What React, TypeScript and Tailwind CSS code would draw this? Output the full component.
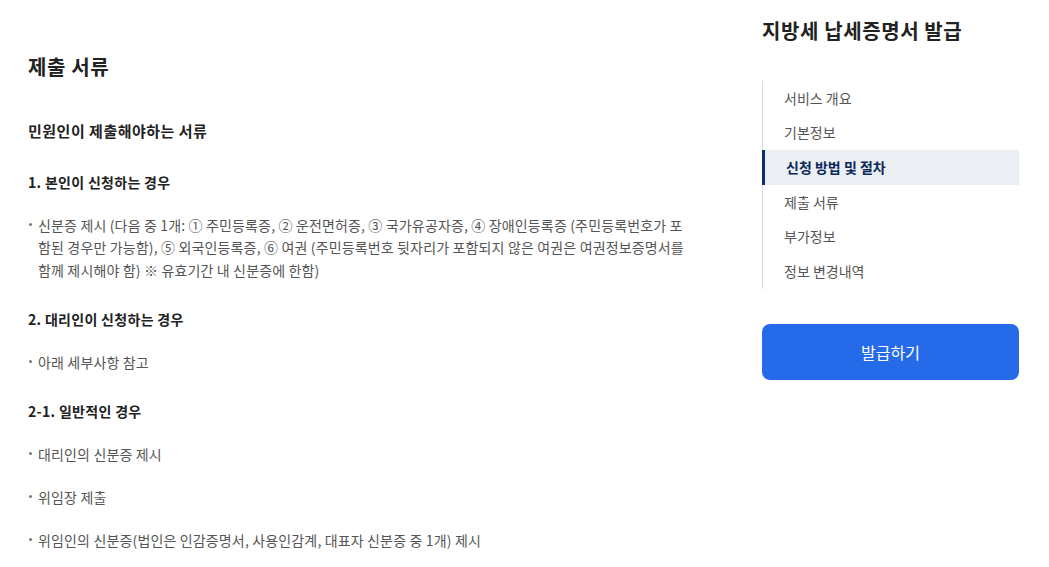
import React from "react";

const navItems = ["서비스 개요", "기본정보", "신청 방법 및 절차", "제출 서류", "부가정보", "정보 변경내역"];
const activeNav = "신청 방법 및 절차";

function Bullet({ children }: { children: React.ReactNode }) {
  return (
    <li className="relative mt-[20.5px] pl-[10px] text-[14px] leading-[22.5px] tracking-[0.15px] text-[#555]">
      <span className="absolute left-[1px] top-[9px] h-[3px] w-[3px] rounded-full bg-[#777]" />
      {children}
    </li>
  );
}

function SubHeading({ children }: { children: React.ReactNode }) {
  return <h4 className="mt-[27px] text-[14px] font-bold leading-[22px] tracking-[0.3px] text-[#222]">{children}</h4>;
}

export default function App() {
  return (
    <div
      className="flex min-h-screen w-full bg-white pl-[28px]"
      style={{ fontFamily: '"Noto Sans CJK KR", "Noto Sans", sans-serif' }}
    >
      {/* ── Main content ── */}
      <main className="w-[662px] shrink-0 pt-[53px]">
        <h2 className="text-[20px] font-bold leading-[28px] tracking-[0.6px] text-[#222]">제출 서류</h2>

        <h3 className="mt-[38px] text-[15px] font-bold leading-[24px] tracking-[0.5px] text-[#222]">민원인이 제출해야하는 서류</h3>

        <h4 className="mt-[28px] text-[14px] font-bold leading-[22px] tracking-[0.3px] text-[#222]">1. 본인이 신청하는 경우</h4>
        <ul>
          <Bullet>
            신분증 제시 (다음 중 1개: ① 주민등록증, ② 운전면허증, ③ 국가유공자증, ④ 장애인등록증 (주민등록번호가 포함된 경우만 가능함), ⑤ 외국인등록증, ⑥ 여권 (주민등록번호 뒷자리가 포함되지 않은 여권은 여권정보증명서를 함께 제시해야 함) ※ 유효기간 내 신분증에 한함)
          </Bullet>
        </ul>

        <SubHeading>2. 대리인이 신청하는 경우</SubHeading>
        <ul>
          <Bullet>아래 세부사항 참고</Bullet>
        </ul>

        <SubHeading>2-1. 일반적인 경우</SubHeading>
        <ul>
          <Bullet>대리인의 신분증 제시</Bullet>
          <Bullet>위임장 제출</Bullet>
          <Bullet>위임인의 신분증(법인은 인감증명서, 사용인감계, 대표자 신분증 중 1개) 제시</Bullet>
        </ul>
      </main>

      {/* ── Sidebar ── */}
      <aside className="ml-[72px] w-[257px] shrink-0 pt-[17px]">
        <h2 className="text-[20px] font-bold leading-[28px] tracking-[0.6px] text-[#222]">지방세 납세증명서 발급</h2>

        <nav className="mt-[36px] border-l border-[#d5dbe5]">
          {navItems.map(item => (
            <div
              key={item}
              className={`flex h-[34.6px] items-center pl-[21px] text-[14px] ${
                item === activeNav
                  ? "-ml-px border-l-[3px] border-[#0b2f6b] bg-[#ebeef3] pl-[19px] font-bold text-[#0b2a5a]"
                  : "text-[#555]"
              }`}
            >
              {item}
            </div>
          ))}
        </nav>

        <button className="mt-[35px] flex h-[56px] w-full items-center justify-center rounded-lg bg-[#256ae8] text-[16px] text-white">
          발급하기
        </button>
      </aside>
    </div>
  );
}
